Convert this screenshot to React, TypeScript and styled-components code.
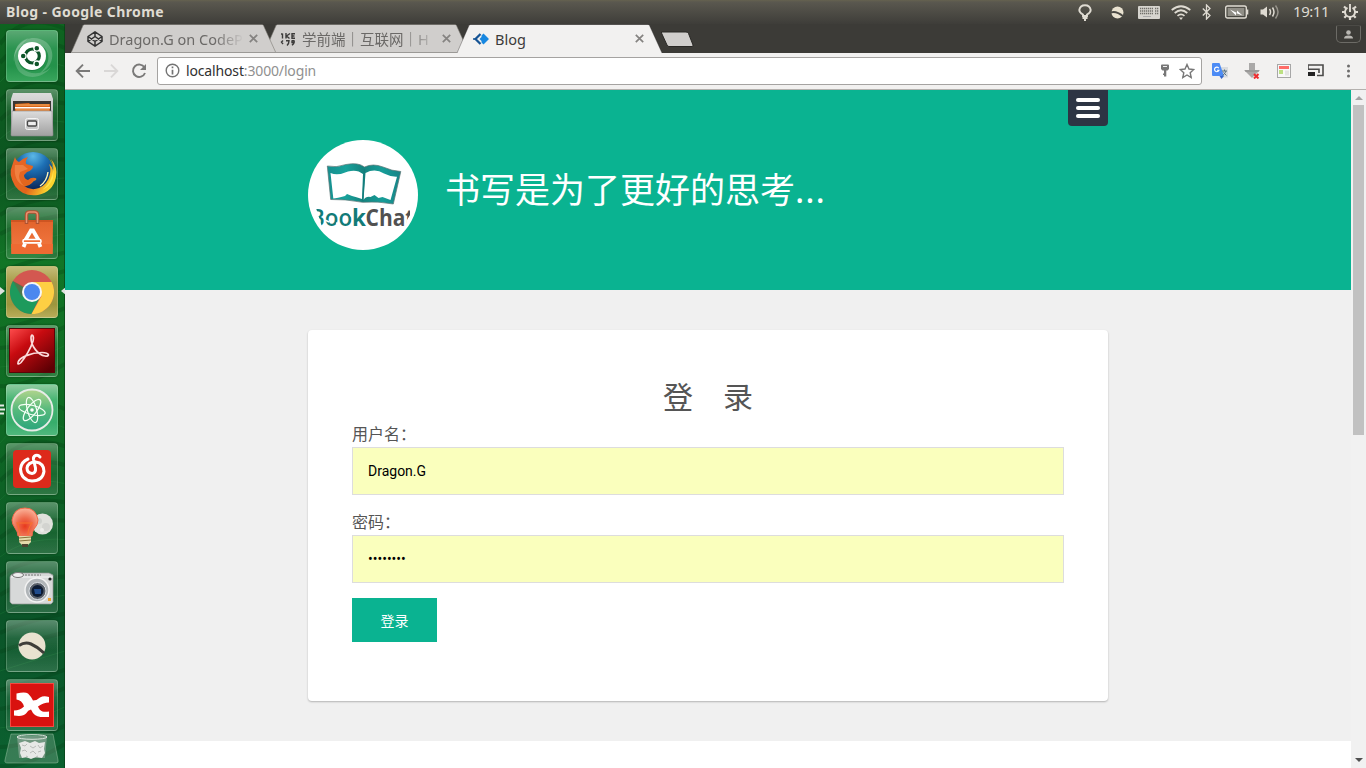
import React from 'react';
import styled, { createGlobalStyle, css } from 'styled-components';

const ui = `"Noto Sans", "Noto Sans CJK SC", sans-serif`;
const web = `Roboto, "Noto Sans CJK SC", sans-serif`;
const teal = '#0ab391';

const GlobalStyle = createGlobalStyle`
  * { box-sizing: border-box; }
  body { margin: 0; overflow: hidden; font-family: ${web}; }
  svg { display: block; flex: none; }
`;

const Desktop = styled.div`
  display: grid;
  grid-template: 24px 744px / 65px 1301px;
  width: 1366px;
  height: 768px;
  overflow: hidden;
`;

/* ---------- system panel ---------- */

const Panel = styled.header`
  grid-column: 1 / 3;
  display: flex;
  align-items: center;
  justify-content: space-between;
  padding: 0 8px 0 6px;
  background: linear-gradient(#65624f 0, #5a584f 2px, #3e3d39 100%);
  color: #dfdbd2;
  font-family: ${ui};
`;

const WindowTitle = styled.div`
  font-size: 14px;
  font-weight: 700;
  line-height: 24px;
  letter-spacing: 0.38px;
  white-space: nowrap;
`;

const Indicators = styled.div`
  display: flex;
  align-items: center;
  height: 24px;
`;

const Indicator = styled.span<{ $w: number; $gap: number }>`
  display: flex;
  justify-content: center;
  width: ${(p) => p.$w}px;
  margin-left: ${(p) => p.$gap}px;
`;

const Clock = styled.time`
  width: 37px;
  margin-left: 13px;
  font-size: 15px;
  line-height: 23px;
  padding-bottom: 1px;
  letter-spacing: -0.45px;
  white-space: nowrap;
`;

/* ---------- launcher ---------- */

const Launcher = styled.nav`
  position: relative;
  display: flex;
  flex-direction: column;
  align-items: flex-start;
  gap: 7px;
  padding: 6px 0 0 6px;
  overflow: hidden;
  background: #0c5a20;
`;

const Wallpaper = styled.svg`
  position: absolute;
  inset: 0;
`;

const Tile = styled.div<{ $tint?: string }>`
  position: relative;
  flex: none;
  width: 52px;
  height: 52px;
  border-radius: 4px;
  border: 1px solid rgba(225, 255, 225, 0.22);
  background: ${(p) =>
    p.$tint ??
    'linear-gradient(rgba(255,255,255,.32), rgba(255,255,255,.1) 35%, rgba(255,255,255,.05) 60%, rgba(255,255,255,.14))'};
  box-shadow: 0 0 2px rgba(0, 30, 0, 0.6);
  > svg { margin: -1px; }
`;

const TrashSlot = styled.div`
  position: relative;
  margin: -5px 0 0 -3px;
`;

const RunningMark = styled.svg<{ $side: 'left' | 'right' }>`
  position: absolute;
  top: 20px;
  ${(p) => (p.$side === 'left' ? css`left: -6px;` : css`right: -8px;`)}
`;

/* ---------- browser ---------- */

const Browser = styled.main`
  display: flex;
  flex-direction: column;
  min-width: 0;
`;

const TabStrip = styled.div`
  display: flex;
  height: 29px;
  padding-left: 6px;
  background: #3c3b37;
`;

const TabBox = styled.div<{ $z: number; $color: string }>`
  position: relative;
  z-index: ${(p) => p.$z};
  flex: none;
  display: flex;
  align-items: center;
  width: 205px;
  height: 29px;
  margin-right: -12px;
  padding: 0 18px 0 16px;
  color: ${(p) => p.$color};
  font-family: ${ui};
  font-size: 14.5px;
`;

const TabShape = styled.svg`
  position: absolute;
  left: 0;
  top: 0;
`;

const TabLabel = styled.span<{ $fade?: boolean }>`
  position: relative;
  flex: 1;
  margin: 0 1px 0 6px;
  line-height: 26px;
  overflow: hidden;
  white-space: nowrap;
  ${(p) => p.$fade && css`mask-image: linear-gradient(90deg, #000 76%, transparent 97%);`}
`;

const Raised = styled.span`
  position: relative;
`;

const NewTab = styled.div`
  margin: 7px 0 0 10px;
`;

const Profile = styled.div`
  display: flex;
  justify-content: center;
  align-items: center;
  width: 25px;
  height: 18px;
  margin: 1px 5px 0 auto;
  border: 1px solid #6c6b66;
  border-top-color: #4b4a46;
  border-radius: 2px 2px 5px 5px;
`;

const Toolbar = styled.div`
  display: flex;
  align-items: center;
  height: 37px;
  padding: 0 9px 1px 10px;
  border-bottom: 1px solid #b4b1ae;
  background: #f2f1f0;
`;

const NavButtons = styled.div`
  display: flex;
  gap: 12px;
  width: 82px;
`;

const AddressBar = styled.div`
  display: flex;
  align-items: center;
  width: 1045px;
  height: 28px;
  padding: 0 6px 0 7px;
  border: 1px solid #a5a3a1;
  border-radius: 3px;
  background: #fff;
  font-family: ${ui};
  font-size: 14px;
`;

const Url = styled.div`
  flex: 1;
  margin-left: 6px;
  color: #909090;
  letter-spacing: -0.15px;
  b { color: #303030; font-weight: 400; }
`;

const AddressActions = styled.div`
  display: flex;
  align-items: center;
  gap: 9px;
`;

const Extensions = styled.div`
  display: flex;
  align-items: center;
  gap: 16px;
  margin-left: 10px;
`;

const Viewport = styled.div`
  display: flex;
  height: 678px;
`;

const Page = styled.div`
  width: 1286px;
  background: #fff;
`;

const Container = styled.div`
  position: relative;
  width: 800px;
  margin: 0 auto;
`;

const Banner = styled.header`
  height: 200px;
  padding-top: 50px;
  background: ${teal};
`;

const Brand = styled.div`
  display: flex;
  gap: 27px;
`;

const Slogan = styled.h1`
  margin: 23px 0 0;
  color: #fff;
  font: 400 35px/54px "Noto Sans", "Noto Sans CJK SC", sans-serif;
  span { letter-spacing: 0.9px; }
`;

const MenuButton = styled.button`
  position: absolute;
  right: 0;
  top: -50px;
  display: flex;
  flex-direction: column;
  gap: 4px;
  width: 40px;
  height: 36px;
  padding: 8px;
  border: 0;
  border-radius: 0 0 4px 4px;
  background: #2d3544;
`;

const MenuBar = styled.span`
  height: 4px;
  border-radius: 2px;
  background: #fff;
`;

const Content = styled.section`
  height: 451px;
  padding-top: 40px;
  background: #f0f0f0;
`;

const Card = styled.form`
  width: 800px;
  height: 371px;
  margin: 0 auto;
  padding: 44px;
  border-radius: 4px;
  background: #fff;
  box-shadow: 0 1px 2px rgba(0, 0, 0, 0.26);
  color: #555;
`;

const FormTitle = styled.h2`
  margin: 0;
  padding-bottom: 4px;
  text-align: center;
  font: 400 30px/42px "Noto Sans CJK SC", sans-serif;
`;

const Field = styled.label`
  display: block;
  height: 88px;
  font: 400 16px/27px "Noto Sans CJK SC", sans-serif;
`;

const TextInput = styled.input`
  display: block;
  width: 712px;
  height: 48px;
  padding: 0 15px;
  border: 1px solid #ddd;
  outline: 0;
  background: #faffbd;
  color: #000;
  font: 400 14px Roboto, sans-serif;
`;

const Submit = styled.button`
  display: block;
  width: 85px;
  height: 44px;
  margin-top: 2px;
  padding: 0 0 1px;
  border: 0;
  background: ${teal};
  color: #fff;
  font: 400 14px "Noto Sans CJK SC", sans-serif;
`;

const ScrollBar = styled.div`
  display: flex;
  flex-direction: column;
  align-items: center;
  justify-content: space-between;
  width: 15px;
  padding-bottom: 6px;
  background: #f1f1f1;
`;

const ScrollThumb = styled.div`
  width: 11px;
  height: 330px;
  margin: 5px 0 auto;
  background: #c1c1c1;
`;

const ScrollArrow = styled.span<{ $down?: boolean }>`
  width: 0;
  height: 0;
  margin-top: ${(p) => (p.$down ? 0 : 6)}px;
  border: 4px solid transparent;
  ${(p) =>
    p.$down
      ? css`border-top-color: #505050; border-bottom: 0;`
      : css`border-bottom-color: #a3a3a3; border-top: 0;`}
`;

/* ---------- drawings ---------- */

const Art = ({ children, w = 52, h = 52 }: { children: React.ReactNode; w?: number; h?: number }) => (
  <svg width={w} height={h} viewBox={`0 0 ${w} ${h}`} fill="none">{children}</svg>
);

const veins = Array.from({ length: 42 }, (_, i) => {
  const y = i * 20 - 30;
  const d = (i * 37) % 19;
  return `M0 ${y + d + 12}Q25 ${y + 14 - d} 65 ${y - 10 + d * 1.4}`;
});

const UbuntuIcon = () => (
  <Art>
    <path d="M8 32C6 12 26 2 40 12C51 21 47 38 34 43C44 35 46 22 35 15C22 8 8 17 8 32Z" fill="#fff" opacity=".22" />
    <path d="M12 40C20 51 38 48 45 37C39 44 24 46 16 38C8 29 13 14 23 8C10 11 4 26 12 40Z" fill="#fff" opacity=".18" />
    <circle cx="26" cy="27" r="14" fill="#126b36" opacity=".45" />
    <circle cx="26" cy="26" r="14" fill="#fff" />
    <circle cx="26.3" cy="26" r="7" stroke="#0d5529" strokeWidth="3.2" />
    <g fill="#0d5529" stroke="#fff" strokeWidth="1.3">
      <circle cx="17.2" cy="26" r="2.9" /><circle cx="30.8" cy="18.2" r="2.9" /><circle cx="30.8" cy="33.9" r="2.9" />
    </g>
  </Art>
);

const FilesIcon = () => (
  <Art>
    <defs>
      <linearGradient id="steel" x2="0" y2="1"><stop stopColor="#dcdcdc" /><stop offset="1" stopColor="#a0a0a0" /></linearGradient>
    </defs>
    <path d="M7 4h38l2 6v36H5V10z" fill="url(#steel)" />
    <path d="M7 12h38v14H7z" fill="#3a3633" />
    <path d="M9 15l14-1 1 1h20v9H9z" fill="#d9661a" />
    <path d="M10 16h33M10 21h33" stroke="#f6b067" />
    <path d="M9 18h35v1.600H9z" fill="#fff" />
    <path d="M6 22h40l1 24q0 1-1 1H6q-1 0-1-1z" fill="url(#steel)" stroke="#8b8b8b" strokeWidth=".6" />
    <rect x="19.500" y="29.500" width="13" height="11" rx="2" fill="#c9c9c9" stroke="#f5f5f5" />
    <rect x="21.500" y="32" width="9" height="5" rx="1" fill="#eee" stroke="#484848" strokeWidth="1.300" />
  </Art>
);

const FirefoxIcon = () => (
  <Art>
    <defs>
      <radialGradient id="globe" cx=".5" cy=".1" r=".8"><stop stopColor="#5cb8e6" /><stop offset=".4" stopColor="#1d70b5" /><stop offset="1" stopColor="#0a2557" /></radialGradient>
      <linearGradient id="fox" x1="0" y1="0" x2="1" y2=".4"><stop stopColor="#e8642a" /><stop offset=".6" stopColor="#e2661b" /><stop offset="1" stopColor="#fbd42e" /></linearGradient>
    </defs>
    <circle cx="27" cy="25" r="21" fill="url(#globe)" />
    <path d="M9 9q1 4 4 5 4-4 9-5-3 4-2 7l7 2q0 4-6 6l-3 3q0 4 4 5 3-3 7-2 2 0 1 2-3 1-4 3-4 4-8 3 7 5 15 2 9-4 11-14 1-6-1-10 4 3 4 8 1-6-2-13 7 8 5 18-3 15-18 18-15 2-23-9-7-12-3-20z" fill="url(#fox)" />
    <path d="M43 10q6 10 3 18-3 9-10 14 8-3 11-12 2-12-4-20z" fill="#ffe34a" />
    <path d="M42 24q-1 9-8 14" stroke="#fff6bd" strokeWidth="1.400" />
    <path d="M9 17l8 0 5 4-8 3q-3 7 4 14-11-5-9-21z" fill="#f3894a" opacity=".75" />
  </Art>
);

const SoftwareIcon = () => (
  <Art>
    <defs><linearGradient id="bag" x2="0" y2="1"><stop stopColor="#e2642c" /><stop offset="1" stopColor="#f37942" /></linearGradient></defs>
    <path d="M5 13h42v2l-.5 32h-41L5 14z" fill="url(#bag)" />
    <path d="M5 37h42l-.5 10H5.500z" fill="#ee6a32" />
    <path d="M5 14h42" stroke="#ba4719" strokeWidth="1.200" />
    <path d="M20.500 17V8q0-3 3-3h5q3 0 3 3v9" stroke="#ad5131" strokeWidth="3.500" />
    <path d="M20.500 16V8q0-3 3-3h5q3 0 3 3v8" stroke="#e79270" strokeWidth="1.500" />
    <path d="M19.500 33L25 23.500h2l5.500 9.500M19 36.500L17.500 40M33 36.500l1.500 3.500" stroke="#fff" strokeWidth="3.800" />
    <rect x="17" y="32.500" width="18" height="3.400" rx="1.500" fill="#ef7038" stroke="#fff" strokeWidth="1.600" />
  </Art>
);

const ChromeIcon = () => (
  <Art>
    <circle cx="26" cy="26" r="22" fill="#d35850" />
    <path d="M26 26L6.900 15A22 22 0 0 0 25.500 48L34 31z" fill="#1d9a5c" />
    <path d="M26 16h19.600A22 22 0 0 1 25.500 48L35.500 30z" fill="#fecf43" />
    <path d="M7 15l9 16 3-10z" fill="#a9362f" opacity=".35" />
    <circle cx="26" cy="26" r="10" fill="#f6f6f6" />
    <circle cx="26" cy="26" r="8" fill="#4b87ef" />
  </Art>
);

const AcrobatIcon = () => (
  <Art>
    <defs><linearGradient id="pdf" x1="0" y1="0" x2=".8" y2="1"><stop stopColor="#ff4e4e" /><stop offset=".4" stopColor="#c80b10" /><stop offset="1" stopColor="#5e0004" /></linearGradient></defs>
    <rect x="3.500" y="3.500" width="45" height="44" fill="url(#pdf)" stroke="#5a0508" />
    <path d="M12 37.500c1-5 13-10 24-10 8 0 8 4.500 3 3.500-7-1-14-10-14-18 0-5 3.500-3 2 3-2 7-8 17-12 21.500-2 2-3.500 2-3 0z" stroke="#fbdada" strokeWidth="1.700" />
  </Art>
);

const AtomIcon = () => (
  <Art>
    <defs><linearGradient id="atom" x2="0" y2="1"><stop stopColor="#b2d58d" /><stop offset=".5" stopColor="#55b97c" /><stop offset="1" stopColor="#2ba57b" /></linearGradient></defs>
    <circle cx="26" cy="26" r="20.500" fill="url(#atom)" stroke="#e7ece7" strokeWidth="1.800" />
    <g stroke="#f4fff6" strokeWidth="1.200">
      <ellipse cx="26" cy="26" rx="13.500" ry="4.600" transform="rotate(14 26 26)" />
      <ellipse cx="26" cy="26" rx="13" ry="4.600" transform="rotate(74 26 26)" />
      <ellipse cx="26" cy="26" rx="13" ry="4.600" transform="rotate(128 26 26)" />
    </g>
    <circle cx="26" cy="26" r="1.800" fill="#fff" />
  </Art>
);

const MusicIcon = () => (
  <Art>
    <rect x="7" y="7" width="38" height="38" rx="4" fill="#dd2a1b" />
    <path d="M34 14q-2-2.500-4.500-1.500-2.500 1-2 4l2 8.500q.5 5-3.500 5.500-5-.5-5-5.500 1-6 8.500-6 8.500 1 8.500 9.500-1.500 9.500-12 9.500-11-1-11.500-12 .5-7 7.500-10" stroke="#fff" strokeWidth="3" strokeLinecap="round" />
  </Art>
);

const BulbIcon = () => (
  <Art>
    <defs><radialGradient id="glow" cx=".5" cy=".65" r=".65"><stop stopColor="#e8391c" /><stop offset=".45" stopColor="#ee6a4d" /><stop offset="1" stopColor="#fbb59c" /></radialGradient></defs>
    <circle cx="36.500" cy="22" r="10.500" fill="#e0e1dc" />
    <circle cx="33" cy="19" r="3" fill="#cfd1cd" /><circle cx="40" cy="25" r="4" fill="#d3d4d0" /><circle cx="36" cy="28" r="2" fill="#eeeeea" />
    <path d="M12 34q0-4-3-8Q6 22 6 18 8 6 19 6t13 12q0 5-4 9-2 3-2 7z" fill="url(#glow)" stroke="#f3694a" />
    <path d="M14 33q-1-9-3-12h15q-4 5-4 12" stroke="#f8702f" strokeWidth="1.200" />
    <path d="M13 34h12v6l-3 3h-6l-3-3z" fill="#e5dbab" /><path d="M13 36l12-1M13 39l12-1" stroke="#86723c" />
    <path d="M16 42h6v3h-6z" fill="#4d4531" />
  </Art>
);

const CameraIcon = () => (
  <Art>
    <path d="M5 14l4-2h34l4 2v27l-2 2H6l-2-2V16z" fill="#d7d9d9" stroke="#929696" strokeWidth=".7" />
    <path d="M5 16h42" stroke="#f7f7f7" /><ellipse cx="12" cy="14" rx="5.500" ry="2.500" fill="#eee" stroke="#777" />
    <path d="M19 14h16" stroke="#777" strokeDasharray="2 1" />
    <circle cx="31" cy="29" r="12" fill="#b0b5b8" stroke="#f3f3f3" strokeWidth="1.500" />
    <circle cx="31.500" cy="30" r="8.500" fill="#596069" stroke="#dadfe4" />
    <circle cx="31.500" cy="30" r="6" fill="#0c1b33" /><path d="M28 28h7v5h-6z" fill="#204c8d" />
    <circle cx="44" cy="18" r="1.600" fill="#222" /><path d="M42 37h3v3h-3z" fill="#eaa12f" />
  </Art>
);

const BallIcon = () => (
  <Art>
    <circle cx="26" cy="26" r="13.500" fill="#e9e2d0" />
    <path d="M13 25.500q6-4 12-1.500 7 3 13 9" stroke="#3e3d39" strokeWidth="3" />
  </Art>
);

const XmindIcon = () => (
  <Art>
    <rect x="4.500" y="4.500" width="43" height="43" fill="#d9120f" stroke="#f44a42" />
    <path d="M10.500 14.500Q19 12.500 22 14.500Q25.500 18 27 21.500Q31 21.500 34 18.500Q37.500 16.500 43 18V23.500Q37.500 23.500 32 27.500Q33.500 31.500 36.500 32.500Q39 33 43 32.500V38H34.500Q28 37.500 25 30.500Q22 31 20 34.500Q17 38 8 36.500V31.500Q14 31.500 18 27.500Q16 21 10.500 20.500z" fill="#fff" />
  </Art>
);

const TrashIcon = () => (
  <Art w={58} h={31}>
    <path d="M8 1h42l5 26q1 3-2 3H5q-4 0-3-3z" fill="#fff" fillOpacity=".18" stroke="#b4d6b9" strokeOpacity=".4" />
    <path d="M14 3h30l-2 22H16z" fill="#b9bfba" opacity=".45" />
    <path d="M16 10l6-2 5 2 5-2 4 2 6-1-1 7 1 4-3 5-6-1-5 2-5-2-4 1-2-5 1-5z" fill="#e6e8e6" />
    <path d="M19 12l3 1 2-2M27 13l3 2 3-2M35 12l2 3 3-2M19 18l3-1 2 2M27 20l3-2 3 3M35 19l3-1M23 23l2 1M33 24l2-1" stroke="#b8bbb8" />
    <ellipse cx="29" cy="4" rx="15" ry="2.300" stroke="#dbe4dc" />
  </Art>
);

const BookLogo = () => (
  <svg width="110" height="110" viewBox="0 0 110 110">
    <defs>
      <clipPath id="logoEdge"><path d="M8 68H102V75L99 80V90H15z" /></clipPath>
      <linearGradient id="cover"><stop stopColor="#168f8f" /><stop offset=".25" stopColor="#18a29b" /><stop offset=".48" stopColor="#15837f" /><stop offset=".75" stopColor="#169d98" /><stop offset="1" stopColor="#188386" /></linearGradient>
    </defs>
    <circle cx="55" cy="55" r="55" fill="#fff" />
    <path d="M19.300 26Q28 28 38 24.500Q50 22 56.500 27Q65 23 75 27Q84 31 92.800 31.500L85.300 64Q70 61 54.500 62.300Q37 59 22.700 59.500z" fill="url(#cover)" stroke="#5b7474" strokeWidth=".7" />
    <path d="M22.500 33Q30 36 40 31.500Q49 29 55 34L54 59Q48 57 44 56l-5-2-2 2Q29 58 25.300 58.500z" fill="#fff" />
    <path d="M57.500 33Q67 28 76 33.500Q83 37 89 36.700L82.500 60l-8-3-4 1-4-3-4 2Q58 56 55.500 60z" fill="#fff" />
    <path d="M56.500 29L54.800 61" stroke="#137c7c" strokeWidth="1.200" />
    <g clipPath="url(#logoEdge)" fontFamily="Open Sans, sans-serif" fontSize="23.500">
      <text x="2" y="86" textLength="56" lengthAdjust="spacingAndGlyphs" fontWeight="600" fill="#127b78">Boo<tspan fontWeight="700">k</tspan></text>
      <text x="57.500" y="86" textLength="49" lengthAdjust="spacingAndGlyphs" fontWeight="700" fill="#515151">Chat</text>
    </g>
    <path d="M17 80l4 2M29 74l3 2M28 83l4 1M42 74l2 3" stroke="#fff" strokeWidth="1.600" />
  </svg>
);

const CloseIcon = () => (
  <svg width="9" height="9" viewBox="0 0 9 9"><path d="M.8.800l7.400 7.400M8.200.800L.800 8.200" stroke="#858381" strokeWidth="1.700" /></svg>
);

const CodepenIcon = () => (
  <svg width="16" height="16" viewBox="0 0 16 16" fill="none" stroke="#333" strokeWidth="1.500" strokeLinejoin="round">
    <path d="M8 .8l7 4.700v5L8 15.200 1 10.500v-5zM8 .8v4.700M8 10.500v4.700M1 5.500l7 5 7-5M1 10.500l7-5 7 5" />
  </svg>
);

const IkeIcon = () => (
  <svg width="16" height="16" viewBox="0 0 16 16" fill="none" stroke="#3c3b3a" strokeWidth="1.400">
    <path d="M2.500 2.500v5M1 3h1.500M6 2v5.500M10 2.500L6.500 5l3 2.500M15 2.700h-3v4.600h3M12 5h2.500M3 9.500L1.500 11l1.500 2M6 9.700h3q0 3-2 4.800M11.500 9.700H14q1 2-2 4.600M12 10v1.500h2" />
  </svg>
);

const BlogIcon = () => (
  <svg width="16" height="16" viewBox="0 0 16 16" fill="none">
    <path d="M7.500 3L2.500 8l5 5" stroke="#155394" strokeWidth="2.200" /><path d="M0 8h3" stroke="#155394" strokeWidth="1.500" />
    <path d="M10.500 2.500l4 4L16 8l-1.500 1.500-4 4-2-2V10L6.500 8l2-2V4.500z" fill="#1787e0" />
  </svg>
);

function Tab({ z, active, icon, label }: { z: number; active?: boolean; icon: React.ReactNode; label: string }) {
  return (
    <TabBox $z={z} $color={active ? '#3c3b3a' : '#6b6967'}>
      <TabShape width="205" height="29" viewBox="0 0 205 29">
        <path d="M0 29L12 1.500Q12.500 .8 13.500 .8H191Q192 .8 192.500 1.500L205 29z" fill={active ? '#f2f1f0' : '#d0cecc'} />
        <path d="M0 29L12 1.500Q12.500 .5 13.500 .5H191Q192 .5 192.500 1.500L205 29" fill="none" stroke={active ? '#2c2b29' : '#77746f'} strokeOpacity={active ? .45 : .7} strokeWidth=".8" />
        {!active && <path d="M0 28.500H205" stroke="#9b9996" />}
      </TabShape>
      <Raised>{icon}</Raised>
      <TabLabel $fade={!active}>{label}</TabLabel>
      <Raised><CloseIcon /></Raised>
    </TabBox>
  );
}

const cream = '#dfdbd2';

const PanelIcons = () => (
  <Indicators>
    <Indicator $w={14} $gap={0}>
      <svg width="14" height="17" viewBox="0 0 14 17" fill="none" stroke={cream} strokeWidth="1.900"><path d="M5 12V10.500Q1.300 8.500 1.300 6 2 1.200 7 1.200T12.700 6q0 2.500-3.700 4.500V12z" /><path d="M4.500 14h5M6 16h2" /></svg>
    </Indicator>
    <Indicator $w={13} $gap={19}>
      <svg width="13" height="13" viewBox="0 0 13 13"><circle cx="6.500" cy="6.500" r="6" fill="#e9e2d0" /><path d="M0 6.500q5-2 12.500 4" stroke="#4a4944" strokeWidth="1.800" fill="none" /></svg>
    </Indicator>
    <Indicator $w={22} $gap={14}>
      <svg width="22" height="13" viewBox="0 0 22 13"><rect width="22" height="13" rx="1" fill="#d6d4ce" /><path d="M2 2.500h13M2 5h13M2 7.500h13M17 2.500h4M17 5h4M17 7.500h4" stroke="#706f6a" strokeWidth="1.300" strokeDasharray="1.300 .7" /><path d="M5 10.500h8" stroke="#aaa" /></svg>
    </Indicator>
    <Indicator $w={20} $gap={11}>
      <svg width="20" height="15" viewBox="0 0 20 15" fill="none" stroke={cream} strokeWidth="1.700"><path d="M.7 5Q10-2.500 19.300 5M3.700 8Q10 2.500 16.300 8M6.500 10.800q3.500-3 7 0" /><path d="M8 12.500h4l-2 2.500z" fill={cream} stroke="none" /></svg>
    </Indicator>
    <Indicator $w={9} $gap={11}>
      <svg width="9" height="16" viewBox="0 0 9 16" fill="none" stroke={cream} strokeWidth="1.300"><path d="M.8 4.500L8 11.500 4.500 15V1L8 4.500.8 11.500" /></svg>
    </Indicator>
    <Indicator $w={24} $gap={14}>
      <svg width="24" height="14" viewBox="0 0 24 14"><rect x=".7" y="1" width="20.600" height="12" rx="1.800" fill="none" stroke={cream} strokeWidth="1.400" /><rect x="2.700" y="3" width="16.600" height="8" fill="#908e86" /><path d="M22.500 4.500v5" stroke={cream} strokeWidth="1.600" /><path d="M5 4.500l7 3.500V5.500l5.500 5L11 8v2.500z" fill="#fff" /></svg>
    </Indicator>
    <Indicator $w={20} $gap={11}>
      <svg width="20" height="16" viewBox="0 0 20 16" fill="none" stroke={cream} strokeWidth="1.500"><path d="M.5 5.500H3L7 2.500v11L3 10.500H.5z" fill={cream} stroke="none" /><path d="M9.500 5q2 3 0 6M12.500 3.500q3 4.500 0 9" /><path d="M15.500 1.500q5 6.500 0 13" stroke="#96938b" /></svg>
    </Indicator>
    <Clock>19:11</Clock>
    <Indicator $w={16} $gap={12}>
      <svg width="16" height="16" viewBox="0 0 16 16" fill="none" stroke={cream}>
        <path d="M5.500 3.700a5 5 0 1 0 5 0" strokeWidth="1.900" /><path d="M8 0v8" strokeWidth="1.900" />
        <path d="M0 8h3M13 8h3M2 2.500l2.200 2M14 2.500l-2.200 2M2.300 13.700l2-2M13.700 13.700l-2-2M8 13v3" strokeWidth="2.200" />
      </svg>
    </Indicator>
  </Indicators>
);

const launchers: { icon: React.ReactNode; tint?: string; mark?: 'window' | 'multi' }[] = [
  { icon: <UbuntuIcon />, tint: 'linear-gradient(#5aa873, #2b9450 35%, #23924a 70%, #38a55c)' },
  { icon: <FilesIcon /> },
  { icon: <FirefoxIcon /> },
  { icon: <SoftwareIcon /> },
  { icon: <ChromeIcon />, tint: 'linear-gradient(#c4bc78, #a79d49 30%, #9c963d 75%, #b8ac58)', mark: 'window' },
  { icon: <AcrobatIcon /> },
  { icon: <AtomIcon />, tint: 'linear-gradient(#8fcba0, #46b572 30%, #37ad6b 75%, #4fb87d)', mark: 'multi' },
  { icon: <MusicIcon /> },
  { icon: <BulbIcon /> },
  { icon: <CameraIcon /> },
  { icon: <BallIcon /> },
  { icon: <XmindIcon /> },
];

export default function App() {
  return (
    <>
      <GlobalStyle />
      <Desktop>
        <Panel>
          <WindowTitle>Blog - Google Chrome</WindowTitle>
          <PanelIcons />
        </Panel>

        <Launcher>
          <Wallpaper width="65" height="744" viewBox="0 0 65 744" fill="none">
            <defs>
              <linearGradient id="leaf" x2="0" y2="1">
                <stop stopColor="#0e6420" /><stop offset=".2" stopColor="#0b5420" /><stop offset=".32" stopColor="#127526" /><stop offset=".5" stopColor="#0f6b23" /><stop offset=".8" stopColor="#0a5428" /><stop offset="1" stopColor="#0b6130" />
              </linearGradient>
            </defs>
            <path d="M0 0h65v744H0z" fill="url(#leaf)" />
            {veins.map((d, i) => (
              <path key={i} d={d} stroke={i % 3 ? '#04380f' : '#2b9344'} strokeWidth={i % 3 ? 4 : 1} opacity=".24" />
            ))}
            <path d="M64.500 0v744" stroke="#063a13" opacity=".6" />
          </Wallpaper>
          {launchers.map((l, i) => (
            <Tile key={i} $tint={l.tint}>
              {l.icon}
              {l.mark === 'window' && (
                <>
                  <RunningMark $side="left" width="6" height="10"><path d="M0 1l5 4-5 4z" fill="#dfe3df" /></RunningMark>
                  <RunningMark $side="right" width="6" height="10"><path d="M6 1L1 5l5 4z" fill="#dfe3df" /></RunningMark>
                </>
              )}
              {l.mark === 'multi' && (
                <RunningMark $side="left" width="5" height="11"><path d="M0 1.500h4M0 5.500h5M0 9.500h4" stroke="#e6eae6" strokeWidth="2" /></RunningMark>
              )}
            </Tile>
          ))}
          <TrashSlot><TrashIcon /></TrashSlot>
        </Launcher>

        <Browser>
          <TabStrip>
            <Tab z={2} icon={<CodepenIcon />} label="Dragon.G on CodeP" />
            <Tab z={1} icon={<IkeIcon />} label="学前端｜互联网｜H" />
            <Tab z={3} active icon={<BlogIcon />} label="Blog" />
            <NewTab>
              <svg width="35" height="17" viewBox="0 0 35 17"><path d="M1.500 1H26Q28 1 28.500 2.500L33 14Q33.500 15.500 32 15.500H9Q7.500 15.500 7 14L1.500 2z" fill="#d0cecc" stroke="#292825" /></svg>
            </NewTab>
            <Profile>
              <svg width="9" height="9" viewBox="0 0 9 9" fill="#b9b7b2"><circle cx="4.500" cy="2.500" r="2.300" /><path d="M0 8.500q0-3 4.500-3T9 8.500z" /></svg>
            </Profile>
          </TabStrip>

          <Toolbar>
            <NavButtons>
              <svg width="16" height="16" viewBox="0 0 16 16" fill="none" stroke="#7a7978" strokeWidth="1.900"><path d="M15 8H2.500M8 1.700L1.700 8 8 14.300" /></svg>
              <svg width="16" height="16" viewBox="0 0 16 16" fill="none" stroke="#d9d7d6" strokeWidth="1.900"><path d="M1 8h12.500M8 1.700L14.300 8 8 14.300" /></svg>
              <svg width="16" height="16" viewBox="0 0 16 16" fill="none" stroke="#7a7978" strokeWidth="1.900"><path d="M13.500 4.500A6.200 6.200 0 1 0 14 10" /><path d="M15 1v6H9z" fill="#7a7978" stroke="none" /></svg>
            </NavButtons>
            <AddressBar>
              <svg width="15" height="15" viewBox="0 0 15 15" fill="none" stroke="#737373" strokeWidth="1.400"><circle cx="7.500" cy="7.500" r="6.300" /><path d="M7.500 3.500v1.700M7.500 6.700v4.800" strokeWidth="1.700" /></svg>
              <Url><b>localhost</b>:3000/login</Url>
              <AddressActions>
                <svg width="10" height="13" viewBox="0 0 10 13"><path d="M2 .5h6q1 0 1 1V5L7.500 6.500H6.300V12.500H4V11H3V9.500h1v-3H2.500L1 5V1.500q0-1 1-1z" fill="#777" /><path d="M3 2.500h4" stroke="#eee" /></svg>
                <svg width="16" height="16" viewBox="0 0 16 16" fill="none" stroke="#777" strokeWidth="1.400"><path d="M8 1.500l2 4.500 4.800.5-3.600 3.200 1 4.800L8 12l-4.200 2.500 1-4.800L1.200 6.500 6 6z" /></svg>
              </AddressActions>
            </AddressBar>
            <Extensions>
              <svg width="16" height="16" viewBox="0 0 16 16"><path d="M6 4h10v10.500H9z" fill="#d9dcdf" /><path d="M1 0h6.500L12 13H1q-1 0-1-1V1q0-1 1-1z" fill="#4c8bf5" /><path d="M7.500 13H12l-2.500 3z" fill="#3366cc" /><path d="M6.800 5.200A2.300 2.300 0 1 0 7 7.200H5" stroke="#fff" strokeWidth="1.100" fill="none" /><path d="M10 8h5M12.500 6.500V8M14 8q-1 3-3.500 4.500M11.500 9.500l3 3" stroke="#58727f" fill="none" /></svg>
              <svg width="16" height="16" viewBox="0 0 16 16"><path d="M5 0h6v7h5l-8 8-8-8h5z" fill="#aaa9a8" /><path d="M1 8h14" stroke="#8a8988" /><path d="M10 11l4.500 4.500M14.500 11L10 15.500" stroke="#ed2d30" strokeWidth="2" /></svg>
              <svg width="16" height="16" viewBox="0 0 16 16"><rect x="1.500" y="1.500" width="13" height="13" fill="#f8f8f8" stroke="#a7a7a7" /><path d="M3 3h10v3H3z" fill="#ff6d68" /><path d="M3 8h4M3 10h4" stroke="#a8d75b" strokeWidth="1.400" /><path d="M9 7.500h4v5H9z" fill="#e4e4e4" /></svg>
              <svg width="16" height="13" viewBox="0 0 16 13"><path d="M0 1h15v10.500H9M0 5V1M0 5.200h11V9" fill="none" stroke="#4c4b4a" strokeWidth="1.600" /><path d="M0 8h7v4H0z" fill="#222" /></svg>
              <svg width="16" height="14" viewBox="0 0 16 14" fill="#6d6c6b"><circle cx="8.500" cy="2" r="1.500" /><circle cx="8.500" cy="7" r="1.500" /><circle cx="8.500" cy="12" r="1.500" /></svg>
            </Extensions>
          </Toolbar>

          <Viewport>
            <Page>
              <Banner>
                <Container>
                  <Brand>
                    <BookLogo />
                    <Slogan>书写是为了更好的思考<span>...</span></Slogan>
                  </Brand>
                  <MenuButton aria-label="menu">
                    <MenuBar /><MenuBar /><MenuBar />
                  </MenuButton>
                </Container>
              </Banner>
              <Content>
                <Card>
                  <FormTitle>登　录</FormTitle>
                  <Field>用户名：<TextInput defaultValue="Dragon.G" /></Field>
                  <Field>密码：<TextInput type="password" defaultValue="dragon88" /></Field>
                  <Submit type="button">登录</Submit>
                </Card>
              </Content>
            </Page>
            <ScrollBar>
              <ScrollArrow />
              <ScrollThumb />
              <ScrollArrow $down />
            </ScrollBar>
          </Viewport>
        </Browser>
      </Desktop>
    </>
  );
}
